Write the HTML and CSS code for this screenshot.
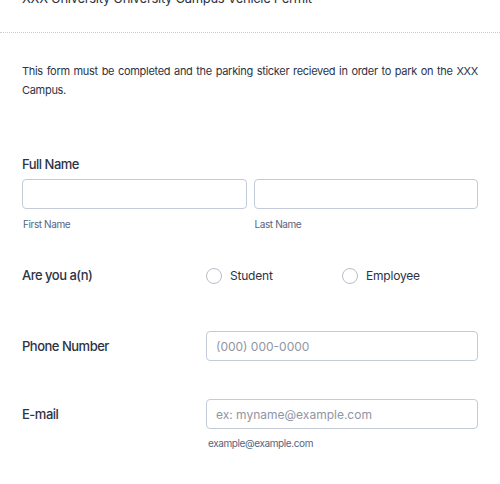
FILE: index.html
```html
<!DOCTYPE html>
<html lang="en">
<head>
<meta charset="utf-8">
<title>Vehicle Permit</title>
<link rel="stylesheet" href="styles.css">
</head>
<body>
<div class="form">
  <div class="header">
    <h1 class="title">XXX University University Campus Vehicle Permit</h1>
  </div>
  <p class="desc">This form must be completed and the parking sticker recieved in order to park on the XXX Campus.</p>

  <div class="field fullname">
    <label class="label">Full Name</label>
    <div class="name-grid">
      <div class="name-col">
        <input class="input" type="text">
        <span class="sublabel">First Name</span>
      </div>
      <div class="name-col">
        <input class="input" type="text">
        <span class="sublabel">Last Name</span>
      </div>
    </div>
  </div>

  <div class="row radio-row">
    <label class="label">Are you a(n)</label>
    <div class="options">
      <label class="option"><span class="radio"></span><span class="opt-text">Student</span></label>
      <label class="option"><span class="radio"></span><span class="opt-text">Employee</span></label>
    </div>
  </div>

  <div class="row phone-row">
    <label class="label">Phone Number</label>
    <div class="control">
      <input class="input" type="text" placeholder="(000) 000-0000">
    </div>
  </div>

  <div class="row email-row">
    <label class="label">E-mail</label>
    <div class="control">
      <input class="input" type="text" placeholder="ex: myname@example.com">
      <span class="sublabel email-sub">example@example.com</span>
    </div>
  </div>
</div>
</body>
</html>
```

FILE: styles.css
```css
* { box-sizing: border-box; }
html, body { margin: 0; padding: 0; background: #ffffff; }
body {
  font-family: Inter, "Noto Sans", "Liberation Sans", sans-serif;
  color: #2c3345;
  overflow: hidden;
}
.form {
  padding: 0 22px;
}
.header {
  margin: -12px -22px 0;
  padding: 0 22px 24px;
  border-bottom: 1px dotted #c8ccd6;
}
.title {
  margin: 0;
  font-size: 13px;
  line-height: 20px;
  letter-spacing: -0.3px;
  font-weight: 400;
  color: #2c3345;
}
.desc {
  margin: 29px 0 0;
  font-size: 11px;
  line-height: 19px;
  letter-spacing: -0.3px;
  color: #2c3345;
  text-align: justify;
}
.label {
  display: block;
  font-size: 13px;
  line-height: 20px;
  letter-spacing: -0.5px;
  font-weight: 500;
  color: #2c3345;
}
.fullname { margin-top: 54px; }
.name-grid {
  margin-top: 5px;
  display: grid;
  grid-template-columns: 1fr 1fr;
  column-gap: 7px;
}
.name-col { display: flex; flex-direction: column; }
.input {
  display: block;
  width: 100%;
  height: 30px;
  border: 1px solid #c3cad8;
  border-radius: 4px;
  padding: 0 9px;
  font-family: inherit;
  font-size: 12px;
  color: #2c3345;
  background: #fff;
  outline: none;
}
.input::placeholder { color: #8f96a3; }
.sublabel {
  display: block;
  margin-top: 8px;
  padding-left: 1px;
  font-size: 10px;
  line-height: 14px;
  letter-spacing: -0.4px;
  color: #57647e;
}
.row {
  display: grid;
  grid-template-columns: 184px 1fr;
  align-items: start;
}
.row .label { line-height: 30px; }
.radio-row { margin-top: 29px; }
.options { display: flex; }
.option {
  width: 136px;
  display: flex;
  align-items: center;
  height: 30px;
}
.radio {
  width: 16px;
  height: 16px;
  border: 1px solid #b8bdc9;
  border-radius: 50%;
  margin-top: 2px;
  flex: none;
}
.opt-text {
  margin-left: 8px;
  font-size: 12px;
  letter-spacing: -0.2px;
  color: #2c3345;
}
.phone-row { margin-top: 41px; }
.email-row { margin-top: 38px; }
.email-sub { margin-top: 7px; padding-left: 2px; }
```
